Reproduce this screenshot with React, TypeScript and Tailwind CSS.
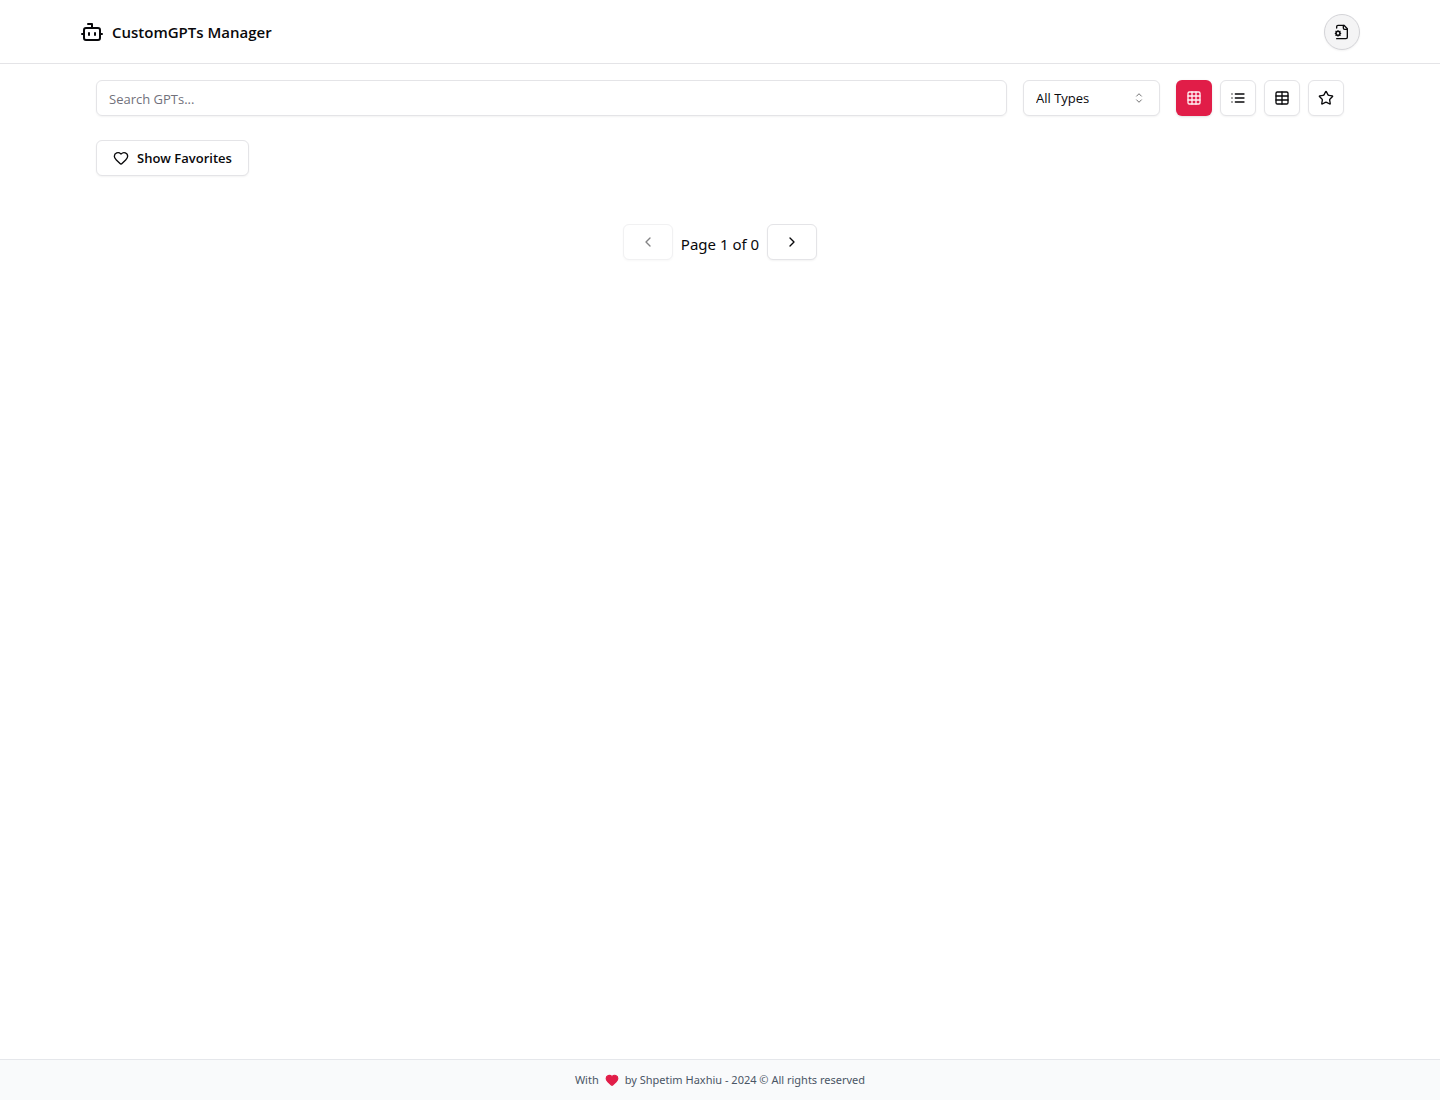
import React, { useState } from 'react';
import { Bot, ChevronLeft, ChevronRight, Heart, Star } from 'lucide-react';

type ViewMode = 'grid' | 'list' | 'table' | 'starred';

const Icon: React.FC<{ className?: string; children: React.ReactNode }> = ({ className = 'size-4', children }) => (
  <svg
    className={className}
    viewBox="0 0 24 24"
    fill="none"
    stroke="currentColor"
    strokeWidth="2"
    strokeLinecap="round"
    strokeLinejoin="round"
    aria-hidden="true"
  >
    {children}
  </svg>
);

const FileCogIcon = () => (
  <Icon>
    <path d="M4 22h14a2 2 0 0 0 2-2V7l-5-5H6a2 2 0 0 0-2 2v2" />
    <path d="M14 2v4a2 2 0 0 0 2 2h4" />
    <circle cx="6" cy="14" r="3" />
    <path d="M6 10v1M6 17v1M10 14H9M3 14H2M9 11l-.88.88M3.88 16.12 3 17M9 17l-.88-.88M3.88 11.88 3 11" />
  </Icon>
);

const GridIcon = () => (
  <Icon>
    <rect width="18" height="18" x="3" y="3" rx="2" />
    <path d="M3 9h18M3 15h18M9 3v18M15 3v18" />
  </Icon>
);

const ListIcon = () => (
  <Icon>
    <path d="M8 6h13M8 12h13M8 18h13M3 6h.01M3 12h.01M3 18h.01" />
  </Icon>
);

const TableIcon = () => (
  <Icon>
    <path d="M12 3v18" />
    <rect width="18" height="18" x="3" y="3" rx="2" />
    <path d="M3 9h18M3 15h18" />
  </Icon>
);

const CaretSortIcon: React.FC<{ className?: string }> = ({ className }) => (
  <svg
    className={className}
    viewBox="0 0 15 15"
    fill="none"
    stroke="currentColor"
    strokeWidth="0.9"
    strokeLinecap="round"
    strokeLinejoin="round"
    aria-hidden="true"
  >
    <path d="M5.25 5.75 7.5 3.5l2.25 2.25M5.25 9.25 7.5 11.5l2.25-2.25" />
  </svg>
);

const views: { id: ViewMode; label: string; icon: React.ReactNode }[] = [
  { id: 'grid', label: 'Grid view', icon: <GridIcon /> },
  { id: 'list', label: 'List view', icon: <ListIcon /> },
  { id: 'table', label: 'Table view', icon: <TableIcon /> },
  { id: 'starred', label: 'Starred view', icon: <Star className="size-4" /> },
];

const outline = 'border border-zinc-200 bg-white shadow-xs hover:bg-zinc-100';

const App: React.FC = () => {
  const [query, setQuery] = useState('');
  const [type, setType] = useState('all');
  const [view, setView] = useState<ViewMode>('grid');

  return (
    <div className="flex min-h-screen flex-col bg-white font-['Segoe_UI','Open_Sans',sans-serif] text-zinc-950">
      <header className="border-b border-zinc-200">
        <div className="mx-auto flex h-[63px] max-w-7xl items-center justify-between">
          <a href="#" className="flex items-center gap-2">
            <Bot className="size-6" />
            <span className="text-[15px] leading-6 font-semibold">CustomGPTs Manager</span>
          </a>
          <button
            type="button"
            aria-label="Settings"
            className="flex size-9 items-center justify-center rounded-full border border-zinc-300 bg-zinc-100 shadow-xs"
          >
            <FileCogIcon />
          </button>
        </div>
      </header>

      <main className="mx-auto w-full max-w-7xl flex-1 p-4">
        <div className="mb-6 flex items-center gap-4">
          <input
            type="text"
            aria-label="Search GPTs"
            placeholder="Search GPTs..."
            value={query}
            onChange={(e) => setQuery(e.target.value)}
            className="h-9 min-w-0 flex-1 rounded-md border border-zinc-200 px-3 pt-0.5 text-[13px] shadow-xs placeholder:text-zinc-500"
          />
          <div className="relative">
            <select
              aria-label="Type"
              value={type}
              onChange={(e) => setType(e.target.value)}
              className="h-9 w-[137px] appearance-none rounded-md border border-zinc-200 bg-white px-3 pt-0.5 text-[13px] shadow-xs"
            >
              <option value="all">All Types</option>
            </select>
            <CaretSortIcon className="pointer-events-none absolute top-[10px] right-[13px] size-4 opacity-60" />
          </div>
          <div className="flex gap-2">
            {views.map((v) => (
              <button
                key={v.id}
                type="button"
                aria-label={v.label}
                aria-pressed={view === v.id}
                onClick={() => setView(v.id)}
                className={`flex size-9 items-center justify-center rounded-md ${
                  view === v.id ? 'bg-[#e11d48] text-rose-50 shadow-sm' : outline
                }`}
              >
                {v.icon}
              </button>
            ))}
          </div>
        </div>

        <button
          type="button"
          className={`flex h-9 items-center gap-2 rounded-md px-4 text-[13px] leading-5 font-semibold ${outline}`}
        >
          <Heart className="size-4" />
          Show Favorites
        </button>

        <nav aria-label="Pagination" className="mt-12 flex justify-center gap-2">
          <button
            type="button"
            aria-label="Previous page"
            disabled
            className={`flex h-9 items-center rounded-md px-4 disabled:opacity-50 ${outline}`}
          >
            <ChevronLeft className="size-4" />
          </button>
          <span className="pt-2 font-['Segoe_UI','Noto_Sans',sans-serif] text-[15px] leading-6">Page 1 of 0</span>
          <button type="button" aria-label="Next page" className={`flex h-9 items-center rounded-md px-4 ${outline}`}>
            <ChevronRight className="size-4" />
          </button>
        </nav>
      </main>

      <footer className="border-t border-gray-200 bg-gray-50 py-3 font-['Segoe_UI','Noto_Sans',sans-serif]">
        <p className="flex items-center justify-center gap-1.5 text-[11px] leading-4 text-gray-600">
          With
          <Heart className="size-3.5 fill-[#e11d48] text-[#e11d48]" />
          by Shpetim Haxhiu - 2024 © All rights reserved
        </p>
      </footer>
    </div>
  );
};

export default App;
